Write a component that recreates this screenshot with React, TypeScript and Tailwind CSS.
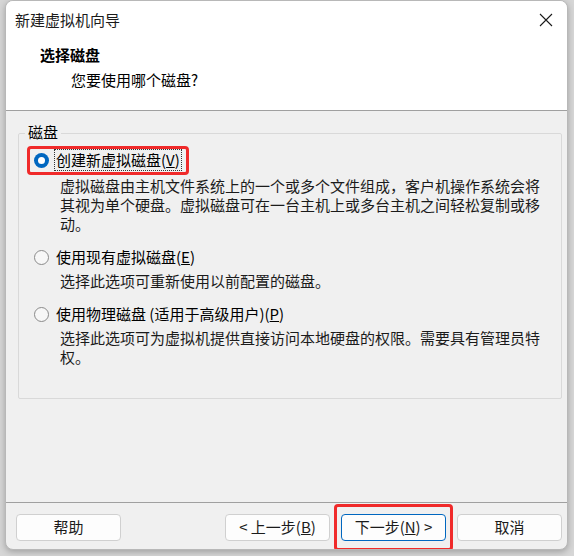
import React from 'react';

const font = { fontFamily: '"Noto Sans CJK SC", "Microsoft YaHei", sans-serif' };

const Radio: React.FC<{ checked?: boolean }> = ({ checked }) =>
  checked ? (
    <span className="w-[15px] h-[15px] rounded-full bg-[#0067c0] flex items-center justify-center shrink-0">
      <span className="w-[7px] h-[7px] rounded-full bg-white" />
    </span>
  ) : (
    <span className="w-[15px] h-[15px] rounded-full border border-[#8a8a8a] bg-[#f7f7f7] shrink-0" />
  );

const Button: React.FC<{ children: React.ReactNode; primary?: boolean }> = ({ children, primary }) => (
  <div
    className={
      'w-[105px] h-[27px] rounded-[4px] bg-[#fdfdfd] flex items-center justify-center text-[15px] text-[#1b1b1b] ' +
      (primary ? 'border border-[#0067c0]' : 'border border-[#d0d0d0]')
    }
  >
    {children}
  </div>
);

export default function App() {
  return (
    <div className="w-[574px] h-[556px] bg-[#d6d6d6] pl-[5px] overflow-hidden" style={font}>
      <div className="w-[563px] h-[550px] bg-[#f0f0f0] rounded-[8px] border border-[#b8b8b8] shadow-[0_2px_6px_rgba(0,0,0,0.25)] overflow-hidden flex flex-col">
        {/* header */}
        <div className="h-[110px] bg-white border-b border-[#a0a0a0] relative shrink-0">
          <div className="flex items-center justify-between pl-[9px] pr-[12px] h-[38px]">
            <span className="text-[15px] text-[#1b1b1b]">新建虚拟机向导</span>
            <svg width="14" height="14" viewBox="0 0 14 14" className="mr-[2px]">
              <path d="M1 1 L13 13 M13 1 L1 13" stroke="#1b1b1b" strokeWidth="1.1" />
            </svg>
          </div>
          <div className="pl-[34px] pt-[6px] text-[15px] font-bold text-black leading-[20px]">选择磁盘</div>
          <div className="pl-[65px] pt-[5px] text-[15px] text-black leading-[20px]">您要使用哪个磁盘?</div>
        </div>

        {/* body */}
        <div className="h-[391px] px-[12px] pt-[22px] shrink-0">
          <div className="relative w-[544px] h-[266px] border border-[#d9d9d9] rounded-[2px]">
            <span className="absolute -top-[12px] left-[6px] px-[3px] bg-[#f0f0f0] text-[15px] leading-[20px] text-black">磁盘</span>

            <div className="pt-[12px] pl-[15px] text-[15px] text-black">
              <div className="relative flex items-center gap-[5px] h-[28px]">
                <Radio checked />
                <span className="border border-dotted border-[#333] leading-[20px] px-[1px]">
                  创建新虚拟磁盘(<u>V</u>)
                </span>
                <div className="absolute left-[-7px] top-0 w-[162px] h-[29px] border-[3px] border-[#f02a2a] rounded-[4px]" />
              </div>
              <p className="pl-[26px] pr-[12px] leading-[19px] mt-[2px] text-[#1b1b1b]">
                虚拟磁盘由主机文件系统上的一个或多个文件组成，客户机操作系统会将其视为单个硬盘。虚拟磁盘可在一台主机上或多台主机之间轻松复制或移动。
              </p>

              <div className="flex items-center gap-[5px] h-[24px] mt-[12px]">
                <Radio />
                <span className="leading-[20px] px-[2px]">
                  使用现有虚拟磁盘(<u>E</u>)
                </span>
              </div>
              <p className="pl-[26px] leading-[19px] mt-[2px] text-[#1b1b1b]">选择此选项可重新使用以前配置的磁盘。</p>

              <div className="flex items-center gap-[5px] h-[24px] mt-[12px]">
                <Radio />
                <span className="leading-[20px] px-[2px]">
                  使用物理磁盘 (适用于高级用户)(<u>P</u>)
                </span>
              </div>
              <p className="pl-[26px] pr-[12px] leading-[19px] mt-[2px] text-[#1b1b1b]">
                选择此选项可为虚拟机提供直接访问本地硬盘的权限。需要具有管理员特权。
              </p>
            </div>
          </div>
        </div>

        {/* footer */}
        <div className="flex-1 border-t border-[#a0a0a0] flex items-start pt-[11px] pl-[10px] pr-[5px]">
          <Button>帮助</Button>
          <div className="flex-1" />
          <Button>&lt; 上一步(<u>B</u>)</Button>
          <div className="relative ml-[11px]">
            <Button primary>
              下一步(<u>N</u>) &gt;
            </Button>
            <div className="absolute left-[-7px] top-[-10px] w-[119px] h-[47px] border-[3px] border-[#f02a2a] rounded-[4px]" />
          </div>
          <div className="ml-[11px]">
            <Button>取消</Button>
          </div>
        </div>
      </div>
    </div>
  );
}
